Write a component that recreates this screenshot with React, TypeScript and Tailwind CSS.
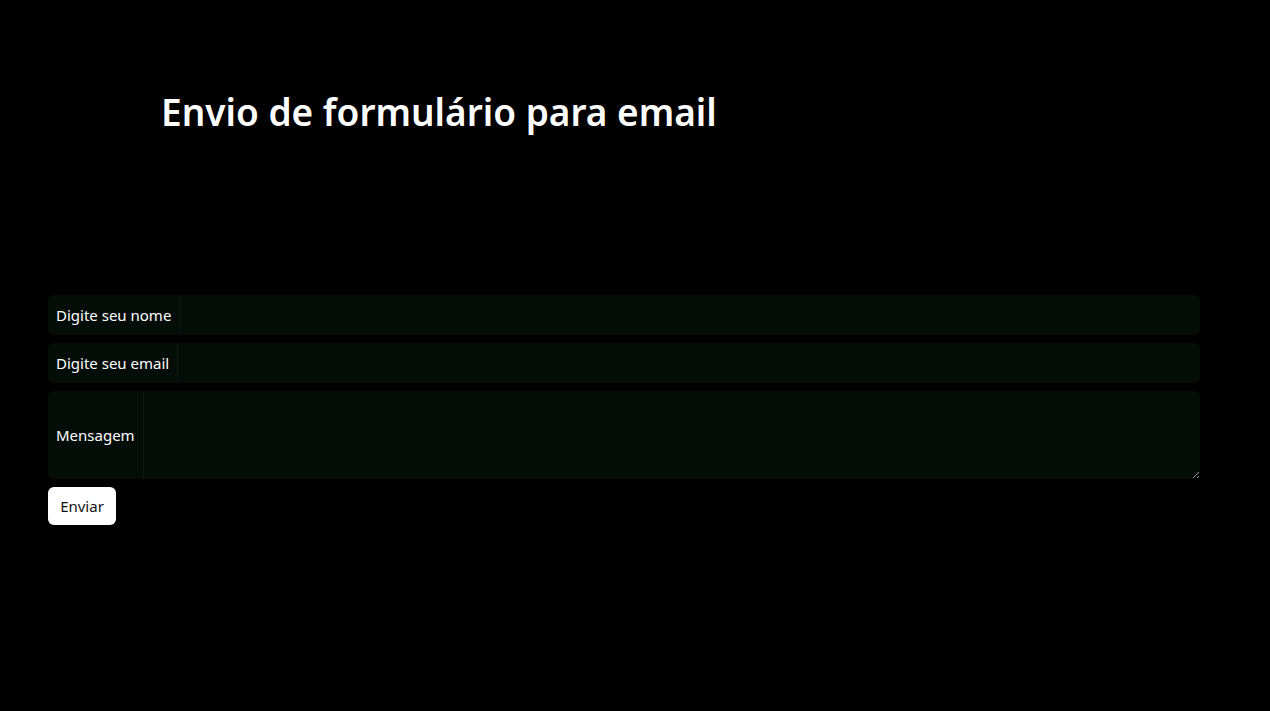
export default function App() {
  return (
    <div className="min-h-[711px] w-full bg-black text-white [font-family:'Noto_Sans',sans-serif]">
      <div className="px-[161px] pt-[90px]">
        <h1 className="text-[37px] font-semibold leading-[1.2]">Envio de formulário para email</h1>
      </div>

      <form className="mt-[161px] flex w-[1248px] flex-col gap-2 px-12" onSubmit={(e) => e.preventDefault()}>
        <div className="flex h-10 rounded-md bg-[#050d09]">
          <label className="flex items-center border-r border-[#0c1a12] px-2 text-[15px]">Digite seu nome</label>
          <input className="flex-1 bg-transparent outline-none" />
        </div>
        <div className="flex h-10 rounded-md bg-[#050d09]">
          <label className="flex items-center border-r border-[#0c1a12] px-2 text-[15px]">Digite seu email</label>
          <input className="flex-1 bg-transparent outline-none" />
        </div>
        <div className="flex h-[88px] rounded-md bg-[#050d09]">
          <label className="flex items-center border-r border-[#0c1a12] px-2 text-[15px]">Mensagem</label>
          <textarea className="flex-1 bg-transparent outline-none" />
        </div>
        <div>
          <button className="h-[38px] w-[68px] rounded-md bg-white text-[15px] text-[#111]">Enviar</button>
        </div>
      </form>
    </div>
  )
}
